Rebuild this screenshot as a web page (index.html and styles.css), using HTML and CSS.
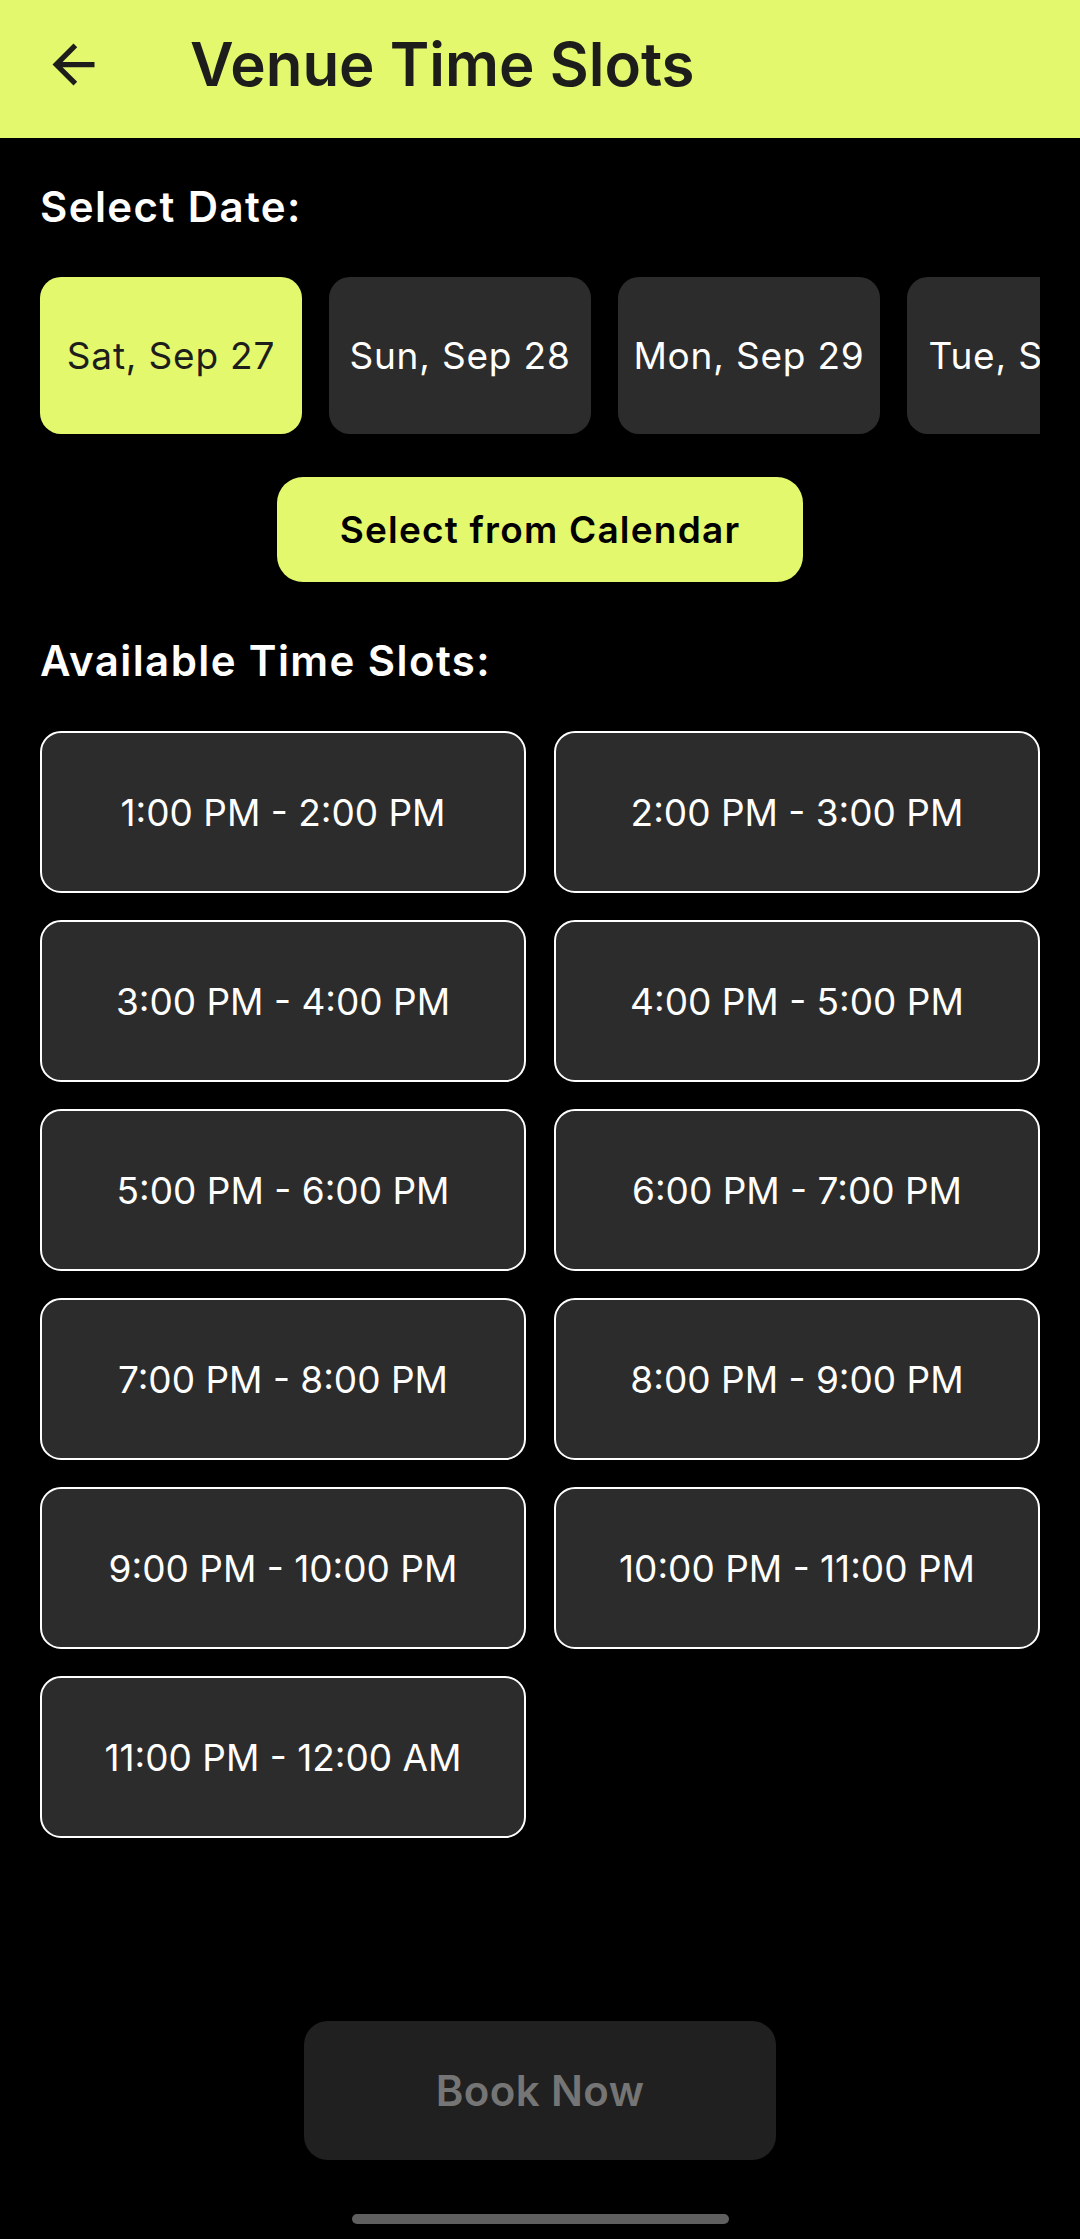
FILE: index.html
```html
<!DOCTYPE html>
<html lang="en">
<head>
<meta charset="utf-8">
<title>Venue Time Slots</title>
<link rel="stylesheet" href="styles.css">
</head>
<body>
<div class="screen">
  <header class="appbar">
    <button class="back" aria-label="Back">
      <svg viewBox="0 0 24 24" width="63" height="63"><path d="M20 11H7.83l5.59-5.59L12 4l-8 8 8 8 1.41-1.41L7.83 13H20v-2z" fill="#1d1d1b"/></svg>
    </button>
    <h1 class="title">Venue Time Slots</h1>
  </header>

  <main class="content">
    <h2 class="label label-date">Select Date:</h2>
    <div class="dates">
      <div class="date selected">Sat, Sep 27</div>
      <div class="date">Sun, Sep 28</div>
      <div class="date">Mon, Sep 29</div>
      <div class="date">Tue, Sep 30</div>
      <div class="date">Wed, Oct 1</div>
    </div>
    <div class="cal-row">
      <button class="cal-btn">Select from Calendar</button>
    </div>
    <h2 class="label label-slots">Available Time Slots:</h2>
    <div class="slots">
      <div class="slot">1:00 PM - 2:00 PM</div>
      <div class="slot">2:00 PM - 3:00 PM</div>
      <div class="slot">3:00 PM - 4:00 PM</div>
      <div class="slot">4:00 PM - 5:00 PM</div>
      <div class="slot">5:00 PM - 6:00 PM</div>
      <div class="slot">6:00 PM - 7:00 PM</div>
      <div class="slot">7:00 PM - 8:00 PM</div>
      <div class="slot">8:00 PM - 9:00 PM</div>
      <div class="slot">9:00 PM - 10:00 PM</div>
      <div class="slot">10:00 PM - 11:00 PM</div>
      <div class="slot">11:00 PM - 12:00 AM</div>
    </div>
  </main>

  <footer class="footer">
    <button class="book">Book Now</button>
    <div class="handle"></div>
  </footer>
</div>
</body>
</html>
```

FILE: styles.css
```css
* { box-sizing: border-box; }
html, body { margin: 0; padding: 0; background: #000; }
body { font-family: "Inter", "Open Sans", sans-serif; color: #fff; }

.screen {
  width: 1080px;
  height: 2239px;
  display: flex;
  flex-direction: column;
  overflow: hidden;
}

.appbar {
  height: 138px;
  background: #e4f86e;
  display: flex;
  align-items: center;
  flex-shrink: 0;
}
.back {
  width: 63px;
  height: 63px;
  margin-left: 42px;
  margin-top: -10px;
  padding: 0;
  border: 0;
  background: none;
  display: flex;
}
.title {
  margin: -10px 0 0 85px;
  font-size: 60px;
  font-weight: 600;
  color: #1d1d1b;
  letter-spacing: 0;
  line-height: 1;
}

.content {
  flex: 1;
  padding: 0 40px;
}
.label {
  margin: 0;
  font-size: 42px;
  font-weight: 600;
  letter-spacing: 1.4px;
  line-height: 1;
  color: #fff;
}
.label-date { padding-top: 48px; }
.dates {
  margin-top: 49px;
  display: flex;
  gap: 27px;
  overflow: hidden;
}
.date {
  flex: 0 0 262px;
  height: 157px;
  border-radius: 21px;
  background: #2c2c2c;
  color: #fff;
  font-size: 37px;
  letter-spacing: 0.8px;
  display: flex;
  align-items: center;
  justify-content: center;
  white-space: nowrap;
  overflow: hidden;
}
.date.selected { background: #e4f86e; color: #1d1d1b; }

.cal-row { display: flex; justify-content: center; margin-top: 43px; }
.cal-btn {
  width: 526px;
  height: 105px;
  border: 0;
  border-radius: 26px;
  background: #e4f86e;
  color: #000;
  font-family: inherit;
  font-size: 37px;
  font-weight: 600;
  letter-spacing: 1.2px;
}

.label-slots { margin-top: 58px; }
.slots {
  margin-top: 49px;
  display: grid;
  grid-template-columns: 1fr 1fr;
  column-gap: 28px;
  row-gap: 27px;
}
.slot {
  height: 162px;
  border: 2.6px solid #fff;
  border-radius: 21px;
  background: #2c2c2c;
  font-size: 37px;
  display: flex;
  align-items: center;
  justify-content: center;
}

.footer {
  flex-shrink: 0;
  display: flex;
  flex-direction: column;
  align-items: center;
}
.book {
  width: 472px;
  height: 139px;
  border: 0;
  border-radius: 24px;
  background: #202020;
  color: #757575;
  font-family: inherit;
  font-size: 42px;
  font-weight: 600;
  letter-spacing: 0.4px;
}
.handle {
  width: 377px;
  height: 10px;
  border-radius: 5px;
  background: #5f5f5f;
  margin-top: 54px;
  margin-bottom: 15px;
}
```
